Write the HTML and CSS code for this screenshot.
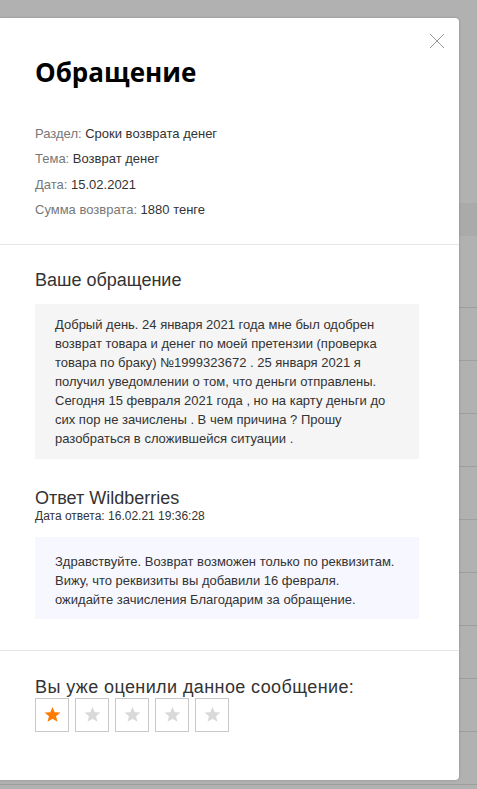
FILE: index.html
```html
<!DOCTYPE html>
<html lang="ru">
<head>
    <meta charset="UTF-8">
    <meta name="viewport" content="width=device-width, initial-scale=1.0">
    <title>Обращение</title>
    <link rel="stylesheet" href="styles.css">
</head>
<body>

    <div class="page">
        <div class="thead"></div>
        <div class="row row-first"></div>
        <div class="row"></div>
        <div class="row"></div>
        <div class="row"></div>
        <div class="row"></div>
        <div class="row"></div>
        <div class="row"></div>
        <div class="row"></div>
        <div class="row"></div>
        <div class="row"></div>
    </div>

    <div class="modal">
        <button class="close" aria-label="Закрыть">
            <svg width="16" height="16" viewBox="0 0 16 16">
                <path d="M1 1 L15 15 M15 1 L1 15" stroke="#9a9a9a" stroke-width="1" fill="none"/>
            </svg>
        </button>

        <div class="modal-head">
            <h1 class="title">Обращение</h1>
            <div class="meta">
                <div><span class="label">Раздел:</span> Сроки возврата денег</div>
                <div><span class="label">Тема:</span> Возврат денег</div>
                <div><span class="label">Дата:</span> 15.02.2021</div>
                <div><span class="label">Сумма возврата:</span> 1880 тенге</div>
            </div>
        </div>

        <div class="modal-body">
            <h2 class="sub">Ваше обращение</h2>
            <div class="msg msg-user">
                Добрый день. 24 января 2021 года мне был одобрен возврат товара и денег по моей претензии (проверка товара по браку) №1999323672 . 25 января 2021 я получил уведомлении о том, что деньги отправлены. Сегодня 15 февраля 2021 года , но на карту деньги до сих пор не зачислены . В чем причина ? Прошу разобраться в сложившейся ситуации .
            </div>

            <h2 class="sub sub-answer">Ответ Wildberries</h2>
            <div class="answer-date">Дата ответа: 16.02.21 19:36:28</div>
            <div class="msg msg-answer">
                Здравствуйте. Возврат возможен только по реквизитам. Вижу, что реквизиты вы добавили 16 февраля. ожидайте зачисления Благодарим за обращение.
            </div>
        </div>

        <div class="modal-foot">
            <div class="rate-title">Вы уже оценили данное сообщение:</div>
            <div class="stars">
                <span class="star active"><svg viewBox="0 0 24 24"><path d="M12 2.5 L14.8 9.2 L22 9.6 L16.4 14.2 L18.3 21.3 L12 17.3 L5.7 21.3 L7.6 14.2 L2 9.6 L9.2 9.2 Z"/></svg></span>
                <span class="star"><svg viewBox="0 0 24 24"><path d="M12 2.5 L14.8 9.2 L22 9.6 L16.4 14.2 L18.3 21.3 L12 17.3 L5.7 21.3 L7.6 14.2 L2 9.6 L9.2 9.2 Z"/></svg></span>
                <span class="star"><svg viewBox="0 0 24 24"><path d="M12 2.5 L14.8 9.2 L22 9.6 L16.4 14.2 L18.3 21.3 L12 17.3 L5.7 21.3 L7.6 14.2 L2 9.6 L9.2 9.2 Z"/></svg></span>
                <span class="star"><svg viewBox="0 0 24 24"><path d="M12 2.5 L14.8 9.2 L22 9.6 L16.4 14.2 L18.3 21.3 L12 17.3 L5.7 21.3 L7.6 14.2 L2 9.6 L9.2 9.2 Z"/></svg></span>
                <span class="star"><svg viewBox="0 0 24 24"><path d="M12 2.5 L14.8 9.2 L22 9.6 L16.4 14.2 L18.3 21.3 L12 17.3 L5.7 21.3 L7.6 14.2 L2 9.6 L9.2 9.2 Z"/></svg></span>
            </div>
        </div>
    </div>

</body>
</html>
```

FILE: styles.css
```css
body {
    margin: 0;
    background-color: #b1b1b1;
    font-family: "Liberation Sans", Arial, sans-serif;
    color: #333;
    overflow: hidden;
}

/* table behind the overlay */
.page {
    padding-top: 203px;
}

.thead {
    height: 33px;
    background-color: #aaaaaa;
}

.row {
    height: 52px;
    border-bottom: 1px solid #9e9e9e;
}

.row-first {
    height: 71px;
}

/* modal */
.modal {
    position: absolute;
    top: 18px;
    left: 0;
    width: 459px;
    height: 762px;
    box-sizing: border-box;
    background-color: #fff;
    border-radius: 0 4px 4px 0;
    box-shadow: 0 0 3px rgba(0, 0, 0, 0.2);
}

.close {
    position: absolute;
    top: 15px;
    right: 14px;
    width: 16px;
    height: 16px;
    padding: 0;
    border: none;
    background: none;
    cursor: pointer;
}

.close svg {
    display: block;
}

.modal-head {
    padding: 39px 35px 21px;
    border-bottom: 1px solid #e6e6e6;
}

.title {
    margin: 0 0 34px;
    font-family: "Open Sans", sans-serif;
    font-size: 26px;
    line-height: 30px;
    font-weight: 700;
    color: #000;
}

.meta {
    font-size: 13px;
    line-height: 25.4px;
    color: #333;
}

.meta .label {
    color: #777;
}

.modal-body {
    padding: 23px 40px 31px 35px;
    border-bottom: 1px solid #e6e6e6;
}

.sub {
    margin: 0 0 12px;
    font-size: 18px;
    line-height: 24px;
    font-weight: 400;
    color: #333;
}

.sub-answer {
    margin: 29px 0 0;
    line-height: 20px;
}

.answer-date {
    font-size: 12px;
    line-height: 16px;
    color: #333;
    margin-bottom: 13px;
}

.msg {
    font-size: 13px;
    line-height: 19px;
    color: #333;
}

.msg-user {
    background-color: #f5f5f5;
    padding: 11px 20px;
}

.msg-answer {
    background-color: #f6f7ff;
    padding: 15px 20px 10px;
}

.modal-foot {
    padding: 26px 35px 50px;
}

.rate-title {
    font-size: 18px;
    color: #333;
    letter-spacing: 0.4px;
}

.stars {
    display: flex;
    gap: 6px;
}

.star {
    width: 32px;
    height: 32px;
    border: 1px solid #c8c8c8;
    display: flex;
    align-items: center;
    justify-content: center;
}

.star svg {
    width: 19px;
    height: 19px;
    fill: #d9d9d9;
}

.star.active svg {
    fill: #ff7a00;
}
```
